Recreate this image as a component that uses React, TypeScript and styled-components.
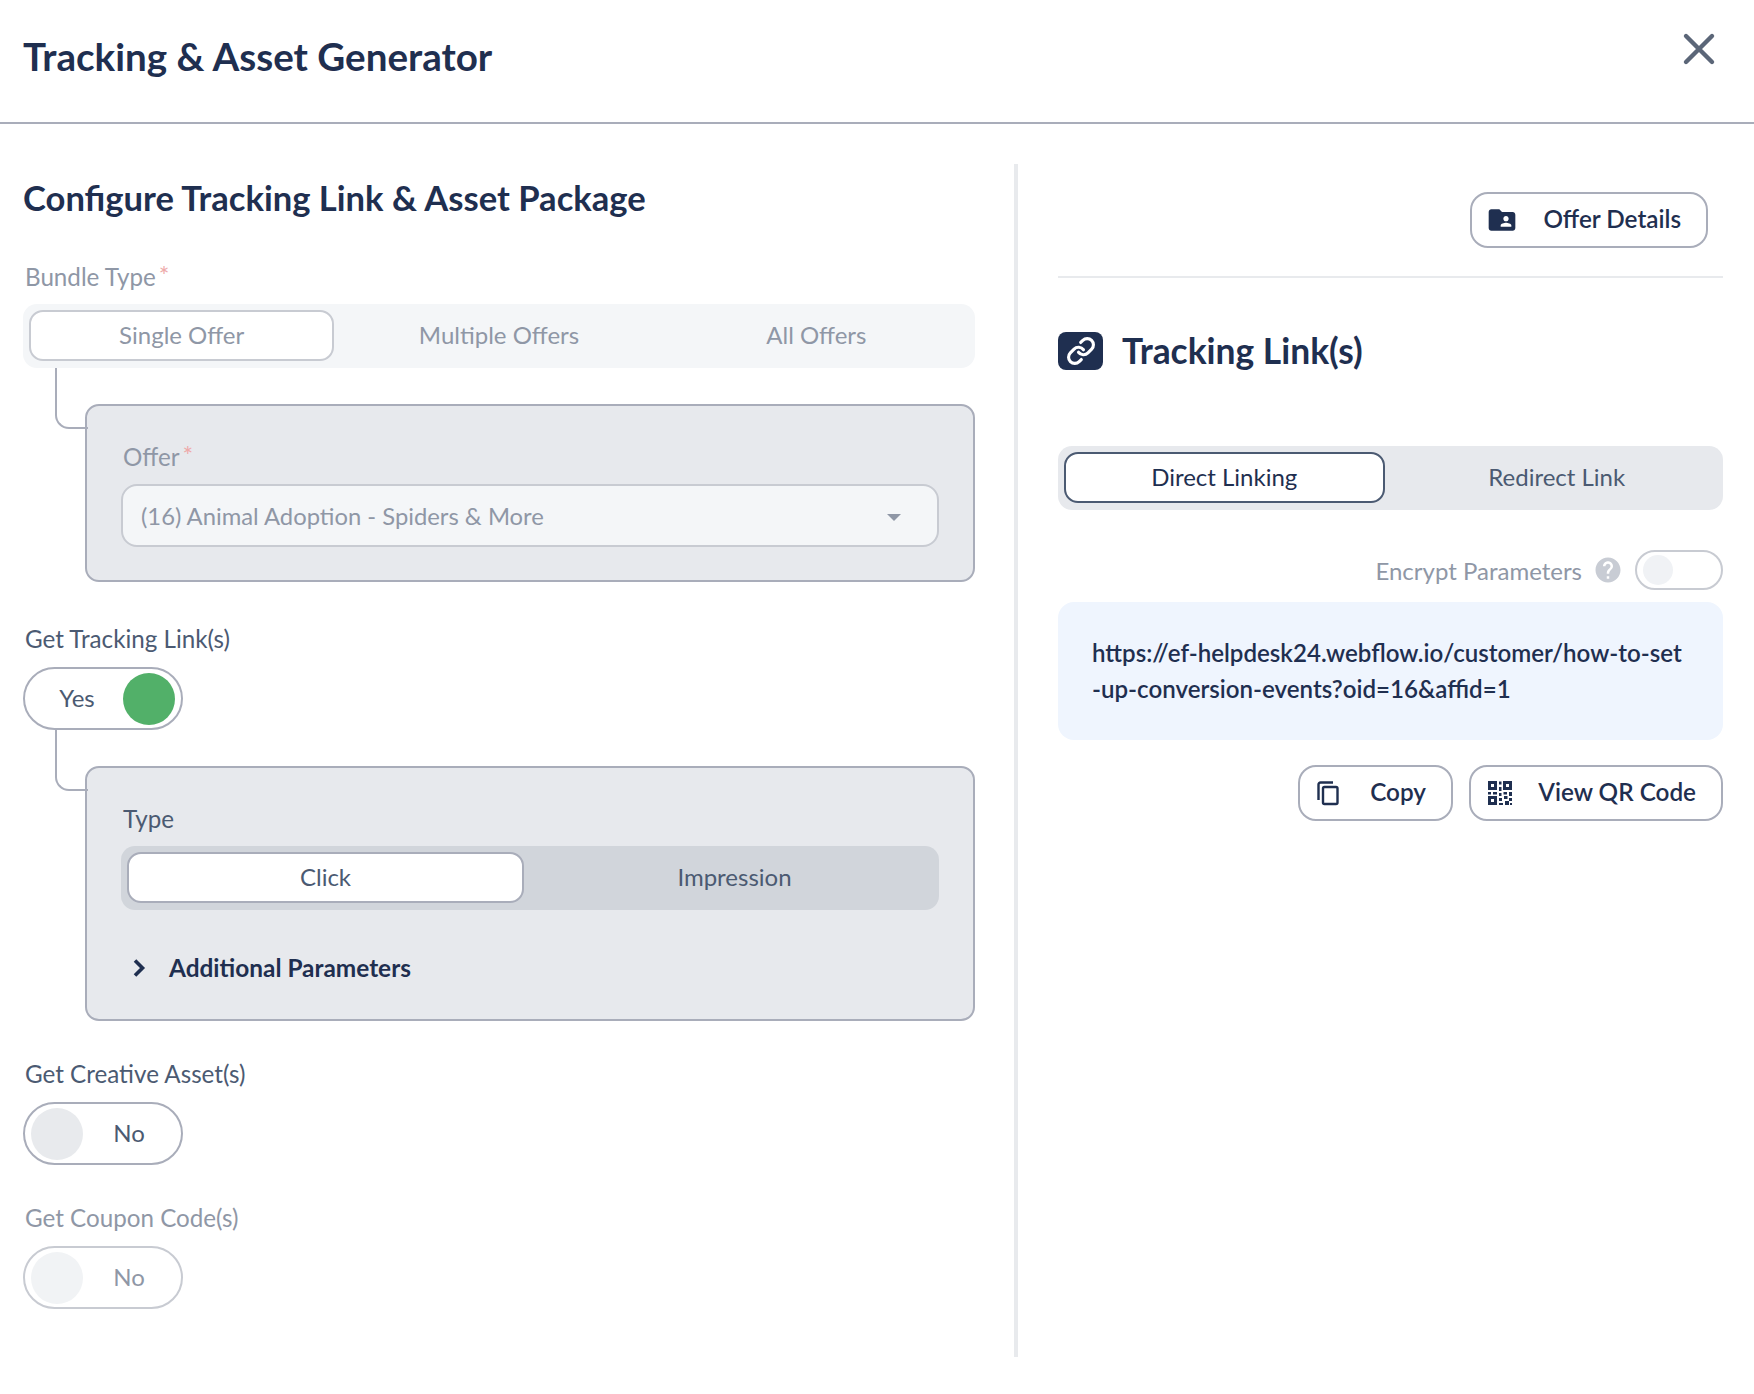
import React from "react";
import styled, { createGlobalStyle } from "styled-components";
import { MdFolderShared, MdHelp } from "react-icons/md";
import { Link } from "lucide-react";

const navy = "#1f2f50";
const slate = "#4b5a72";
const faded = "#8f97a6";
const line = "#a9adba";

const GlobalStyle = createGlobalStyle`
  html, body {
    margin: 0;
    background: #fff;
    font-family: "Lato", "Liberation Sans", sans-serif;
    color: ${navy};
  }
  * { box-sizing: border-box; }
`;

const Page = styled.div`
  width: 1754px;
  height: 1394px;
  overflow: hidden;
`;

const Header = styled.header`
  height: 124px;
  padding: 0 38px 8px 23px;
  border-bottom: 2px solid ${line};
  display: flex;
  justify-content: space-between;
  align-items: center;
`;

const Title = styled.h1`
  margin: 0 0 2px;
  font-size: 38.6px;
  font-weight: 700;
`;

const CloseButton = styled.button`
  border: 0;
  background: none;
  padding: 0;
  margin-bottom: 16px;
  width: 34px;
  height: 34px;
  color: #5b6678;
  svg { display: block; }
`;

const Columns = styled.main`
  display: flex;
  margin-top: 40px;
  height: 1193px;
`;

const LeftColumn = styled.section`
  width: 1014px;
  padding: 0 39px 0 23px;
`;

const RightColumn = styled.aside`
  width: 740px;
  padding: 28px 31px 0 40px;
  border-left: 4px solid #e8eaed;
`;

const Heading = styled.h2`
  margin: 14px 0 0;
  font-size: 34.6px;
  font-weight: 700;
  line-height: 40px;
`;

const Label = styled.div<{ $muted?: boolean }>`
  font-size: 24.2px;
  line-height: 32px;
  padding-left: 2px;
  color: ${(p) => (p.$muted ? faded : slate)};
`;

const Star = styled.span`
  display: inline-block;
  color: #eeaaaa;
  font-size: 25px;
  line-height: 1;
  margin-left: 3px;
  vertical-align: 1px;
`;

const Tabs = styled.div<{ $tone: "light" | "mid" | "dark"; $count: number }>`
  display: grid;
  grid-template-columns: repeat(${(p) => p.$count}, 1fr);
  height: 64px;
  margin-top: 11px;
  border-radius: 14px;
  background: ${(p) => (p.$tone === "light" ? "#f4f6f8" : p.$tone === "mid" ? "#e7e9ed" : "#d1d5db")};
`;

const Tab = styled.div<{ $active?: boolean; $muted?: boolean; $strong?: boolean }>`
  display: flex;
  align-items: center;
  justify-content: center;
  margin: 6px;
  height: 51px;
  padding-bottom: 2px;
  font-size: 24px;
  border-radius: 14px;
  color: ${(p) => (p.$muted ? faded : p.$strong ? navy : slate)};
  ${(p) =>
    p.$active &&
    `background: #fff; border: 2px solid ${p.$muted ? "#c8cbd2" : p.$strong ? slate : line};`}
`;

const Nested = styled.div<{ $stem: number }>`
  position: relative;
  margin-left: 62px;
  margin-top: ${(p) => p.$stem}px;
  padding: 0 34px;
  background: #e7e9ed;
  border: 2px solid ${line};
  border-radius: 14px;

  &::before {
    content: "";
    position: absolute;
    left: -32px;
    top: ${(p) => -p.$stem - 2}px;
    width: 31px;
    height: ${(p) => p.$stem + 23}px;
    border-left: 2px solid ${line};
    border-bottom: 2px solid ${line};
    border-bottom-left-radius: 14px;
  }
`;

const OfferPanel = styled(Nested)`
  height: 178px;
  padding-top: 35px;
`;

const TypePanel = styled(Nested)`
  height: 255px;
  padding-top: 35px;
`;

const Select = styled.div`
  margin-top: 11px;
  height: 63px;
  padding: 0 36px 0 18px;
  display: flex;
  align-items: center;
  justify-content: space-between;
  background: #f4f6f8;
  border: 2px solid #c8cbd2;
  border-radius: 16px;
  font-size: 23.8px;
  color: ${faded};
`;

const Caret = styled.span`
  width: 0;
  height: 0;
  margin-top: 3px;
  border-left: 7px solid transparent;
  border-right: 7px solid transparent;
  border-top: 7px solid ${faded};
`;

const Disclosure = styled.div`
  display: flex;
  align-items: center;
  gap: 23px;
  margin: 43px 0 0 11px;
  font-size: 24.4px;
  font-weight: 700;
  color: ${navy};
  svg { display: block; }
`;

const Field = styled.div<{ $top: number }>`
  margin-top: ${(p) => p.$top}px;
`;

const Switch = styled.div<{ $on?: boolean; $off?: boolean }>`
  margin-top: 12px;
  width: 160px;
  height: 63px;
  padding: 4px 6px;
  display: flex;
  flex-direction: ${(p) => (p.$on ? "row-reverse" : "row")};
  align-items: center;
  justify-content: flex-start;
  background: #fff;
  border: 2px solid ${(p) => (p.$off ? "#c8cbd2" : line)};
  border-radius: 32px;
  font-size: 24px;
  color: ${(p) => (p.$off ? faded : slate)};
`;

const Thumb = styled.span<{ $color: string }>`
  flex: none;
  width: 52px;
  height: 52px;
  border-radius: 50%;
  background: ${(p) => p.$color};
`;

const SwitchText = styled.span`
  flex: 1;
  text-align: center;
  padding-bottom: 2px;
`;

const ActionRow = styled.div`
  display: flex;
  justify-content: flex-end;
  gap: 16px;
`;

const OutlineButton = styled.button<{ $width: number }>`
  display: flex;
  align-items: center;
  justify-content: space-between;
  width: ${(p) => p.$width}px;
  height: 56px;
  padding: 0 25px 4px 14px;
  background: #fff;
  border: 2px solid ${line};
  border-radius: 18px;
  font-family: inherit;
  font-size: 24.3px;
  font-weight: 600;
  color: ${navy};
  svg { display: block; margin-top: 4px; }
`;

const TopAction = styled(ActionRow)`
  padding-right: 15px;
  padding-bottom: 28px;
  border-bottom: 2px solid #e8eaed;
`;

const LinkTitle = styled.div`
  display: flex;
  align-items: center;
  gap: 19px;
  margin-top: 54px;
  font-size: 35.4px;
  font-weight: 700;
  line-height: 36px;
`;

const LinkBadge = styled.span`
  display: flex;
  align-items: center;
  justify-content: center;
  width: 45px;
  height: 38px;
  border-radius: 8px;
  background: ${navy};
  color: #fff;
`;

const LinkTabs = styled(Tabs)`
  margin-top: 76px;
`;

const EncryptRow = styled.div`
  display: flex;
  align-items: center;
  justify-content: flex-end;
  margin-top: 40px;
  font-size: 24px;
  color: ${faded};
  svg { display: block; margin: 0 12px 0 11px; color: #c8ccd4; }
`;

const MiniSwitch = styled.div`
  width: 88px;
  height: 40px;
  padding: 3px 6px;
  border: 2px solid #c8cbd2;
  border-radius: 20px;
  background: #fff;
`;

const MiniThumb = styled.div`
  width: 30px;
  height: 30px;
  border-radius: 50%;
  background: #f0f2f5;
`;

const UrlBox = styled.div`
  margin-top: 12px;
  height: 138px;
  padding: 33px 33px 33px 34px;
  background: #eff5fe;
  border-radius: 16px;
  font-size: 24.1px;
  font-weight: 600;
  line-height: 36px;
  white-space: nowrap;
  color: ${navy};
`;

const BottomActions = styled(ActionRow)`
  margin-top: 25px;
`;

function CopyIcon() {
  return (
    <svg width="28" height="28" viewBox="0 0 28 28" fill="none" stroke="currentColor" strokeWidth="2.4">
      <path d="M4.5 21V5.5a2 2 0 0 1 2-2H19" />
      <rect x="9" y="8" width="14.5" height="17" rx="1.5" />
    </svg>
  );
}

function QrIcon() {
  return (
    <svg width="30" height="30" viewBox="0 0 30 30" fill="currentColor">
      <path fillRule="evenodd" d="M3 3h9v9H3zM6 6v3h3V6zM18 3h9v9h-9zM21 6v3h3V6zM3 18h9v9H3zM6 21v3h3v-3z" />
      <path d="M14 3.500h2.500v3H14zM14 9h2.500v4H14zM3 14h3v2.500H3zM8 14h4v2.500H8zM14 15h2.500v3H14zM18.500 14H22v2.500h-3.500zM24 14h3v4h-3zM19 18h3.500v3H19zM14 20h3v3h-3zM24 20h3v3h-3zM20 23h4v4h-4zM14 25h4v2h-4zM25 25h2v2h-2z" />
    </svg>
  );
}

export default function App() {
  return (
    <Page>
      <GlobalStyle />
      <Header>
        <Title>Tracking &amp; Asset Generator</Title>
        <CloseButton aria-label="Close">
          <svg width="34" height="34" viewBox="0 0 34 34" fill="none" stroke="currentColor" strokeWidth="4.4" strokeLinecap="round">
            <path d="M4 4l26 26M30 4L4 30" />
          </svg>
        </CloseButton>
      </Header>
      <Columns>
        <LeftColumn>
          <Heading>Configure Tracking Link &amp; Asset Package</Heading>
          <Field $top={43}>
            <Label $muted>Bundle Type<Star>*</Star></Label>
          </Field>
          <Tabs $tone="light" $count={3}>
            <Tab $active $muted>Single Offer</Tab>
            <Tab $muted>Multiple Offers</Tab>
            <Tab $muted>All Offers</Tab>
          </Tabs>
          <OfferPanel $stem={36}>
            <Label $muted>Offer<Star>*</Star></Label>
            <Select>
              (16) Animal Adoption - Spiders &amp; More
              <Caret />
            </Select>
          </OfferPanel>
          <Field $top={41}>
            <Label>Get Tracking Link(s)</Label>
            <Switch $on>
              <Thumb $color="#52b069" />
              <SwitchText>Yes</SwitchText>
            </Switch>
          </Field>
          <TypePanel $stem={36}>
            <Label>Type</Label>
            <Tabs $tone="dark" $count={2}>
              <Tab $active>Click</Tab>
              <Tab>Impression</Tab>
            </Tabs>
            <Disclosure>
              <svg width="14" height="20" viewBox="0 0 14 20" fill="none" stroke="currentColor" strokeWidth="3.6">
                <path d="M3 2.500l7.500 7.500L3 17.500" />
              </svg>
              Additional Parameters
            </Disclosure>
          </TypePanel>
          <Field $top={37}>
            <Label>Get Creative Asset(s)</Label>
            <Switch>
              <Thumb $color="#e8eaed" />
              <SwitchText>No</SwitchText>
            </Switch>
          </Field>
          <Field $top={37}>
            <Label $muted>Get Coupon Code(s)</Label>
            <Switch $off>
              <Thumb $color="#f1f3f5" />
              <SwitchText>No</SwitchText>
            </Switch>
          </Field>
        </LeftColumn>
        <RightColumn>
          <TopAction>
            <OutlineButton $width={238}>
              <MdFolderShared size={32} />
              Offer Details
            </OutlineButton>
          </TopAction>
          <LinkTitle>
            <LinkBadge><Link size={30} strokeWidth={2.5} /></LinkBadge>
            Tracking Link(s)
          </LinkTitle>
          <LinkTabs $tone="mid" $count={2}>
            <Tab $active $strong>Direct Linking</Tab>
            <Tab>Redirect Link</Tab>
          </LinkTabs>
          <EncryptRow>
            Encrypt Parameters
            <MdHelp size={30} />
            <MiniSwitch><MiniThumb /></MiniSwitch>
          </EncryptRow>
          <UrlBox>
            https://ef-helpdesk24.webflow.io/customer/how-to-set
            <br />
            -up-conversion-events?oid=16&amp;affid=1
          </UrlBox>
          <BottomActions>
            <OutlineButton $width={155}>
              <CopyIcon />
              Copy
            </OutlineButton>
            <OutlineButton $width={254}>
              <QrIcon />
              View QR Code
            </OutlineButton>
          </BottomActions>
        </RightColumn>
      </Columns>
    </Page>
  );
}
